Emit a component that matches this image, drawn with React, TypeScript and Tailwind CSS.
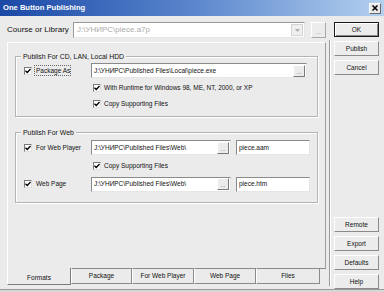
import React from "react";

const Check = () => (
  <div className="w-[8px] h-[8px] bg-white border border-t-[#7a7a7a] border-l-[#7a7a7a] border-r-[#e0e0e0] border-b-[#e0e0e0] flex items-center justify-center shrink-0">
    <svg width="6" height="6" viewBox="0 0 7 7">
      <path d="M0.5 3.2 L2.6 5.3 L6.5 1.2" stroke="#000" strokeWidth="1.6" fill="none" />
    </svg>
  </div>
);

const Btn = ({ label, def }: { label: string; def?: boolean }) => (
  <div
    className={
      "h-[15px] w-[45px] flex items-center justify-center bg-[#ececec] " +
      (def
        ? "border border-[#1a1a1a] shadow-[inset_1px_1px_0_#ffffff,inset_-1px_-1px_0_#8a8a8a]"
        : "border border-t-white border-l-white border-r-[#8a8a8a] border-b-[#8a8a8a]")
    }
  >
    {label}
  </div>
);

const Field = ({ text, w, dots }: { text: string; w: string; dots?: boolean }) => (
  <div
    className={
      "h-[15px] bg-white border border-t-[#8a8a8a] border-l-[#8a8a8a] border-r-[#e6e6e6] border-b-[#e6e6e6] flex items-center pl-[2px] " +
      w
    }
  >
    <span className="flex-1 whitespace-nowrap overflow-hidden">{text}</span>
    {dots && (
      <div className="w-[12px] h-[12px] mr-[1px] bg-[#ececec] border border-t-white border-l-white border-r-[#7a7a7a] border-b-[#7a7a7a] flex items-end justify-center text-[6px] leading-[7px] text-[#555]">
        ...
      </div>
    )}
  </div>
);

const Group = ({ title, children, h }: { title: string; children: React.ReactNode; h: string }) => (
  <div className={"relative border border-[#b4b4b4] shadow-[1px_1px_0_#ffffff,inset_1px_1px_0_#ffffff] w-[303px] " + h}>
    <div className="absolute -top-[5px] left-[5px] bg-[#ebebeb] px-[2px] leading-[9px] text-[6.9px]">{title}</div>
    {children}
  </div>
);

export default function App() {
  return (
    <div className="w-[384px] h-[292px] bg-[#ebebeb] overflow-hidden font-['Liberation_Sans',Arial,sans-serif] text-[6.5px] text-[#111] flex flex-col">
      <div className="h-[16px] shrink-0 flex items-center pl-[3px] pr-[3px] bg-gradient-to-r from-[#1c48a6] via-[#5a86cc] to-[#b4d0ef]">
        <span className="font-bold text-white text-[7.6px]">One Button Publishing</span>
        <div className="ml-auto w-[12px] h-[11px] bg-[#e8e8e8] border border-t-white border-l-white border-r-[#6a6a6a] border-b-[#6a6a6a] flex items-center justify-center">
          <svg width="6" height="6" viewBox="0 0 6 6">
            <path d="M0.5 0.5 L5.5 5.5 M5.5 0.5 L0.5 5.5" stroke="#000" strokeWidth="1.5" />
          </svg>
        </div>
      </div>
      <div className="flex flex-1 pt-[6px]">
        <div className="w-[327px] flex flex-col">
          <div className="h-[16px] flex items-center text-[8px]">
            <span className="ml-[7px] w-[66px]">Course or Library</span>
            <div className="w-[232px] h-[16px] bg-white border border-t-[#9a9a9a] border-l-[#9a9a9a] border-r-[#e6e6e6] border-b-[#e6e6e6] flex items-center pl-[3px]">
              <span className="flex-1 text-[#ababab]">J:\УНИРС\piece.a7p</span>
              <div className="w-[12px] h-[12px] mr-[1px] bg-[#efefef] border border-[#d4d4d4] flex items-center justify-center">
                <svg width="5" height="3" viewBox="0 0 5 3">
                  <path d="M0 0 L5 0 L2.5 3 Z" fill="#b0b0b0" />
                </svg>
              </div>
            </div>
            <div className="ml-[6px] w-[15px] h-[16px] bg-[#ececec] border border-t-white border-l-white border-r-[#a8a8a8] border-b-[#a8a8a8] flex items-end justify-center text-[6px] leading-[9px] text-[#888]">
              ...
            </div>
          </div>
          <div className="mt-[4px] ml-[7px] w-[319px] h-[226px] border-t border-l border-r border-t-white border-l-white border-r-[#a0a0a0] pl-[7px] pt-[13px]">
            <Group title="Publish For CD, LAN, Local HDD" h="h-[61px]">
              <div className="flex items-center mt-[6px]">
                <div className="ml-[8px] mr-[2px]"><Check /></div>
                <div className="border border-dotted border-[#666] px-[1px] w-[37px] h-[11px] flex items-center whitespace-nowrap">Package As</div>
                <div className="ml-[20px]">
                  <Field text="J:\УНИРС\Published Files\Local\piece.exe" w="w-[216px]" dots />
                </div>
              </div>
              <div className="flex items-center mt-[5px] ml-[77px] gap-[3px]">
                <Check />
                <span>With Runtime for Windows 98, ME, NT, 2000, or XP</span>
              </div>
              <div className="flex items-center mt-[6px] ml-[77px] gap-[3px]">
                <Check />
                <span>Copy Supporting Files</span>
              </div>
            </Group>
            <div className="mt-[15px]">
              <Group title="Publish For Web" h="h-[71px]">
                <div className="flex items-center mt-[7px]">
                  <div className="ml-[8px] mr-[4px]"><Check /></div>
                  <span className="w-[55px]">For Web Player</span>
                  <Field text="J:\УНИРС\Published Files\Web\" w="w-[140px]" dots />
                  <div className="ml-[5px]">
                    <Field text="piece.aam" w="w-[74px]" />
                  </div>
                </div>
                <div className="flex items-center mt-[6px] ml-[77px] gap-[3px]">
                  <Check />
                  <span>Copy Supporting Files</span>
                </div>
                <div className="flex items-center mt-[6px]">
                  <div className="ml-[8px] mr-[4px]"><Check /></div>
                  <span className="w-[55px]">Web Page</span>
                  <Field text="J:\УНИРС\Published Files\Web\" w="w-[140px]" dots />
                  <div className="ml-[5px]">
                    <Field text="piece.htm" w="w-[74px]" />
                  </div>
                </div>
              </Group>
            </div>
          </div>
          <div className="flex ml-[7px] h-[17px]">
            <div className="w-[64px] h-[17px] border-l border-b border-r border-l-white border-b-[#7a7a7a] border-r-[#7a7a7a] flex items-center justify-center pt-[3px]">Formats</div>
            <div className="w-[61px] h-[16px] border border-t-[#8a8a8a] border-l-white border-r-[#8a8a8a] border-b-[#8a8a8a] flex items-center justify-center">Package</div>
            <div className="w-[62px] h-[16px] border border-t-[#8a8a8a] border-l-white border-r-[#8a8a8a] border-b-[#8a8a8a] flex items-center justify-center">For Web Player</div>
            <div className="w-[62px] h-[16px] border border-t-[#8a8a8a] border-l-white border-r-[#8a8a8a] border-b-[#8a8a8a] flex items-center justify-center">Web Page</div>
            <div className="w-[64px] h-[16px] border border-t-[#8a8a8a] border-l-white border-r-[#8a8a8a] border-b-[#8a8a8a] flex items-center justify-center">Files</div>
            <div className="w-[6px] h-[1px] bg-[#8a8a8a]"></div>
          </div>
        </div>
        <div className="w-[1px] ml-[2px] mt-[18px] mb-[3px] bg-[#9a9a9a] border-r border-r-white box-content"></div>
        <div className="ml-[3px] flex flex-col gap-[4px]">
          <Btn label="OK" def />
          <Btn label="Publish" />
          <Btn label="Cancel" />
          <div className="h-[134px]"></div>
          <Btn label="Remote" />
          <Btn label="Export" />
          <Btn label="Defaults" />
          <Btn label="Help" />
        </div>
      </div>
      <div className="h-[4px] shrink-0 border-t border-t-[#9a9a9a] bg-[#d6d6d6]"></div>
    </div>
  );
}
